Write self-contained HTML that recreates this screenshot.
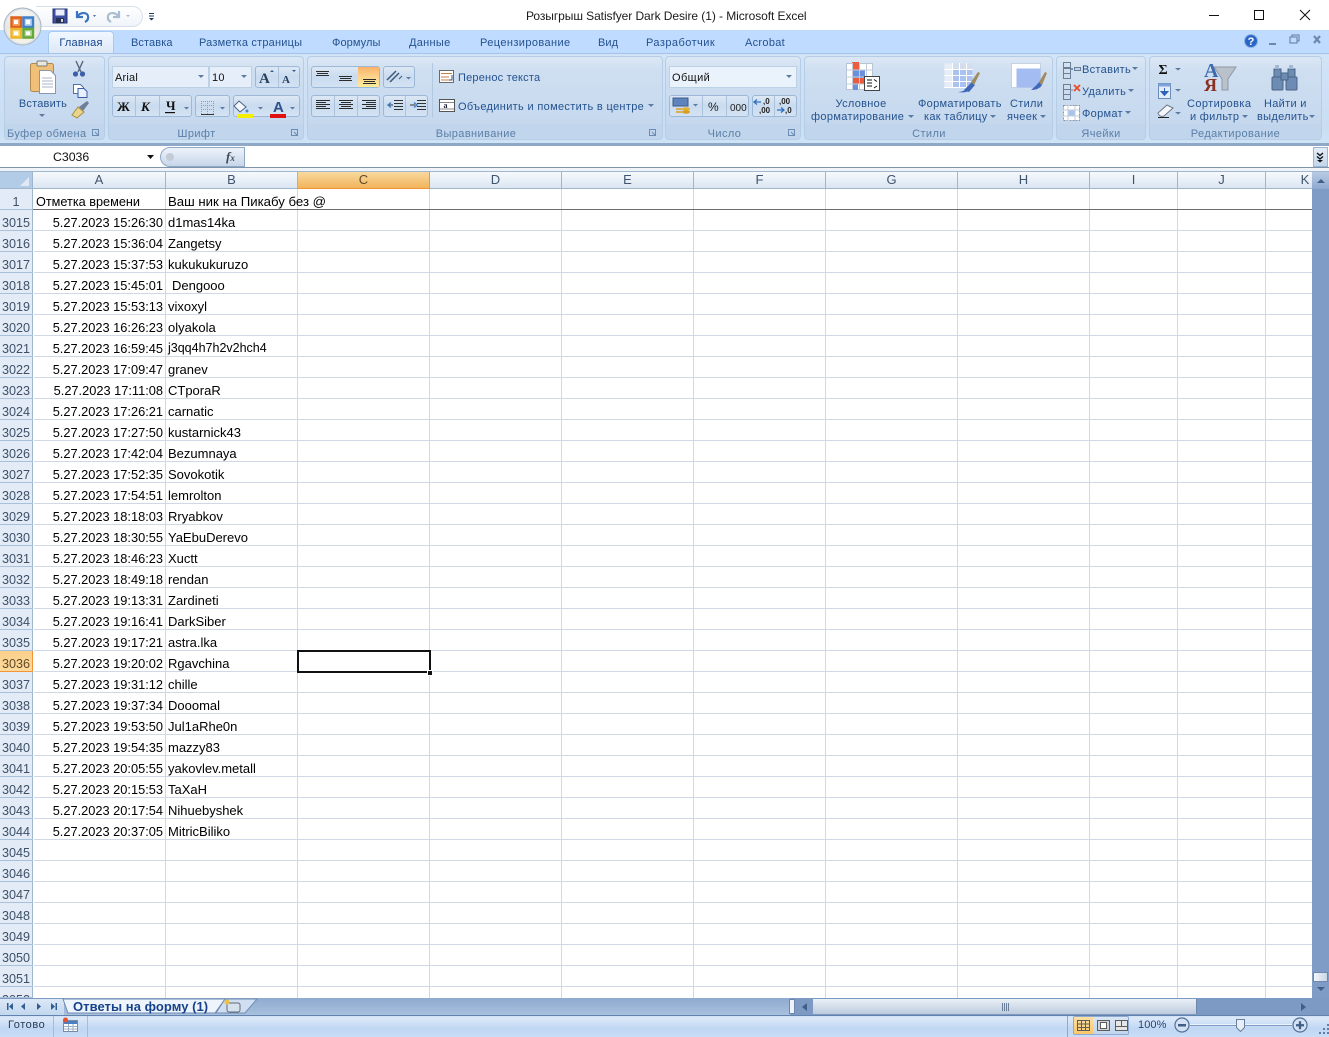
<!DOCTYPE html>
<html lang="ru"><head><meta charset="utf-8"><title>Excel</title>
<style>
html,body{margin:0;padding:0;background:#fff}
body{width:1329px;height:1037px;overflow:hidden;position:relative;font-family:"Liberation Sans",sans-serif}
div,svg{position:absolute}
.t{font-size:11px;letter-spacing:.3px;color:#24528f;white-space:nowrap;line-height:13px}
.c{text-align:center}
.lab{font-size:11px;letter-spacing:.4px;color:#5a7ea8;white-space:nowrap;line-height:13px;text-align:center;top:127px}
.grp{top:56px;height:84px;border:1px solid #b6cde6;border-radius:4px;box-sizing:border-box;background:linear-gradient(#dbe7f5 0,#cfdff1 14px,#c5d8ee 68px);overflow:hidden}
.grp:after{content:"";position:absolute;left:0;right:0;bottom:0;height:15px;background:#c1d6ec}
.btn{border:1px solid #9db8d6;border-radius:3px;box-sizing:border-box;background:linear-gradient(#dde8f5,#c9dbef 50%,#d4e3f3)}
.fld{background:#e6eff9;border:1px solid #bcd0e6;box-sizing:border-box}
.ch{top:172px;height:17px;box-sizing:border-box;background:linear-gradient(#f6f9fc,#dbe6f2);border-right:1px solid #9eb6ce;border-bottom:1px solid #9eb6ce;text-align:center;font-size:13px;line-height:16px;color:#40546e}
.rh{left:0;width:33px;height:21px;box-sizing:border-box;background:#e2ebf6;border-bottom:1px solid #a9c0da;border-right:1px solid #9eb6ce;text-align:center;font-size:12.6px;line-height:26px;color:#3e5068}
.a{left:34px;width:129px;text-align:right;font-size:12.8px;line-height:23px;color:#000;white-space:nowrap}
.b{left:168px;font-size:13px;line-height:23px;color:#000;white-space:nowrap}
.vl{top:189px;height:809px;width:1px;background:#d0d7e5}
.hl{left:34px;width:1278px;height:1px;background:#d0d7e5}
.ar{width:0;height:0;border-left:3px solid transparent;border-right:3px solid transparent;border-top:3px solid #5b7ba3}
</style></head><body>

<!-- title bar -->
<div style="left:0;top:0;width:1329px;height:30px;background:#fff"></div>
<div style="left:36px;top:6px;width:107px;height:21px;border:1px solid #d5dfeb;border-left:none;border-radius:0 11px 11px 0;background:linear-gradient(#fff,#f0f4f9);box-sizing:border-box"></div>
<div class="t" style="left:526px;top:9px;font-size:12px;letter-spacing:-.07px;color:#1a1a1a;line-height:14px">Розыгрыш Satisfyer Dark Desire (1)  -  Microsoft Excel</div>
<svg style="left:1200px;top:5px" width="129" height="22" viewBox="0 0 129 22" fill="none" stroke="#111"><path d="M9 10.500h10"/><rect x="54.500" y="5.500" width="9" height="9"/><path d="M100 5l10 10M110 5l-10 10"/></svg>

<!-- quick access -->
<svg style="left:52px;top:8px" width="108" height="17" viewBox="0 0 108 17">
<rect x="1" y="1" width="14" height="14" fill="#3d4f9e" stroke="#27357a"/><rect x="3.500" y="1.500" width="9" height="6" fill="#e8eefc"/><rect x="4" y="10" width="8" height="5" fill="#28304f"/><rect x="9" y="11" width="2" height="3" fill="#cdd"/>
<path d="M25 3v6h6M25.500 8.500C28 4 35 4 36 8c.7 3-1 5-3 6" fill="none" stroke="#3a73c0" stroke-width="2.200"/>
<path d="M41 7l3 0-1.500 2z" fill="#506d94"/>
<path d="M66 3v6h-6M65.500 8.500C63 4 56 4 55 8c-.7 3 1 5 3 6" fill="none" stroke="#a8bcd2" stroke-width="2.200" transform="translate(1 0)"/>
<path d="M74 7l4 0-2 2z" fill="#a8b6c6"/>
<path d="M97 5.500h5M97 8h5" stroke="#1c3a63" fill="none"/><path d="M97 10h5l-2.500 2.500z" fill="#1c3a63"/>
</svg>

<!-- tab strip -->
<div style="left:0;top:30px;width:1329px;height:24px;background:#bfdbff"></div>
<div style="left:48px;top:31px;width:66px;height:23px;box-sizing:border-box;border:1px solid #a9c9ee;border-bottom:none;border-radius:4px 4px 0 0;background:linear-gradient(#f0f7ff,#dde9f7)"></div>
<div class="t c" style="left:48px;top:37px;width:66px;color:#15428b;letter-spacing:.2px">Главная</div>
<div class="t" style="left:131px;top:37px;letter-spacing:.1px">Вставка</div>
<div class="t" style="left:199px;top:37px;letter-spacing:.2px">Разметка страницы</div>
<div class="t" style="left:332px;top:37px;letter-spacing:.1px">Формулы</div>
<div class="t" style="left:409px;top:37px;letter-spacing:.3px">Данные</div>
<div class="t" style="left:480px;top:37px;letter-spacing:.4px">Рецензирование</div>
<div class="t" style="left:598px;top:37px;letter-spacing:.1px">Вид</div>
<div class="t" style="left:646px;top:37px;letter-spacing:.45px">Разработчик</div>
<div class="t" style="left:745px;top:37px;letter-spacing:.3px">Acrobat</div>
<svg style="left:1240px;top:32px" width="89" height="20" viewBox="0 0 89 20">
<circle cx="11" cy="9" r="6.500" fill="#2a66c8" stroke="#8fb2e0"/><text x="11" y="13" text-anchor="middle" font-size="11" font-weight="bold" fill="#fff" font-family="Liberation Sans">?</text>
<rect x="29" y="11" width="7" height="2" fill="#6d88a8"/>
<rect x="52" y="3" width="7" height="6" fill="none" stroke="#6d88a8" stroke-width="1.200"/><rect x="50" y="5" width="7" height="6" fill="#bfdbff" stroke="#6d88a8" stroke-width="1.200"/>
<path d="M74 4l6 7M80 4l-6 7" stroke="#6d88a8" stroke-width="2.200"/>
</svg>

<!-- ribbon -->
<div style="left:0;top:53px;width:1329px;height:92px;background:linear-gradient(#d3e4f8,#c9ddf3 80%,#cfe4f6);border-top:1px solid #a4c3e6;box-sizing:border-box"></div>
<div style="left:0;top:143px;width:1329px;height:3px;background:#8ea8c6"></div>

<div class="grp" style="left:4px;width:101px"></div>
<div class="grp" style="left:108px;width:196px"></div>
<div class="grp" style="left:307px;width:356px"></div>
<div class="grp" style="left:665px;width:136px"></div>
<div class="grp" style="left:804px;width:249px"></div>
<div class="grp" style="left:1056px;width:90px"></div>
<div class="grp" style="left:1149px;width:173px"></div>

<div class="lab" style="left:7px;top:128px">Буфер обмена</div>
<div class="lab" style="left:108px;width:177px;top:128px">Шрифт</div>
<div class="lab" style="left:307px;width:338px;top:128px">Выравнивание</div>
<div class="lab" style="left:665px;width:119px;top:128px">Число</div>
<div class="lab" style="left:804px;width:250px;top:128px">Стили</div>
<div class="lab" style="left:1056px;width:90px;top:128px">Ячейки</div>
<div class="lab" style="left:1149px;width:173px;top:128px">Редактирование</div>

<svg style="left:0;top:125px" width="810" height="15" viewBox="0 0 810 15" fill="none" stroke="#6b8cb2">
<path d="M92.500 4.500h6v6h-6zM95 7l3 3"/><path d="M291.500 4.500h6v6h-6zM294 7l3 3"/><path d="M649.500 4.500h6v6h-6zM652 7l3 3"/><path d="M788.500 4.500h6v6h-6zM791 7l3 3"/>
</svg>

<!-- clipboard -->
<svg style="left:26px;top:58px" width="70" height="66" viewBox="0 0 70 66">
<rect x="4.500" y="5.500" width="23" height="28" rx="2" fill="#f0c078" stroke="#b08a4e"/>
<rect x="11" y="3" width="10" height="5" rx="1" fill="#e8e8e0" stroke="#7d7d70"/>
<path d="M13.500 12.500h11l5 5v18h-16z" fill="#fff" stroke="#8a98ad"/><path d="M16 20h10M16 23h11M16 26h11M16 29h11" stroke="#a8b3c4"/>
<path d="M50 3l5 11M57 3l-5 11" stroke="#56647c" stroke-width="1.400" fill="none"/><circle cx="49.500" cy="16" r="2.600" fill="#3a5fa8"/><circle cx="56.500" cy="16" r="2.600" fill="#3a5fa8"/>
<path d="M47.500 26.500h7l3 3v6h-10z" fill="#fff" stroke="#5570a0"/><path d="M52 30.500h6l3 3v6h-9z" fill="#e8f0ff" stroke="#3a5fa8"/>
<path d="M46 57l6-8 6 5-7 6z" fill="#e8d48a" stroke="#a89040"/><path d="M53 49l8-6 2 2-6 8z" fill="#6f7f9a"/>
</svg>
<div class="t c" style="left:4px;top:98px;width:78px;letter-spacing:.2px">Вставить</div>
<div class="ar" style="left:39px;top:114px"></div>

<!-- font -->
<div class="fld" style="left:112px;top:66px;width:97px;height:22px"></div>
<div class="fld" style="left:209px;top:66px;width:43px;height:22px"></div>
<div class="t" style="left:115px;top:72px;color:#111;letter-spacing:.2px">Arial</div>
<div class="t" style="left:212px;top:72px;color:#111;letter-spacing:.2px">10</div>
<div class="ar" style="left:198px;top:75px"></div><div class="ar" style="left:241px;top:75px"></div>
<div class="btn" style="left:255px;top:66px;width:45px;height:22px"></div>
<div style="left:278px;top:67px;width:1px;height:20px;background:#adc3dc"></div>
<div class="btn" style="left:112px;top:95px;width:80px;height:22px"></div>
<div class="btn" style="left:195px;top:95px;width:35px;height:22px"></div>
<div class="btn" style="left:233px;top:95px;width:67px;height:22px"></div>
<div style="left:135px;top:96px;width:1px;height:20px;background:#adc3dc"></div>
<div style="left:159px;top:96px;width:1px;height:20px;background:#adc3dc"></div>
<svg style="left:112px;top:64px" width="192" height="56" viewBox="0 0 192 56" font-family="Liberation Serif" font-weight="bold">
<text x="147" y="19" font-size="15" fill="#25405f">A</text><text x="170" y="19" font-size="11" fill="#25405f">A</text>
<path d="M158 8l2-2 2 2zM180 6h4l-2 2z" fill="#2e5c9a"/>
<text x="5" y="47" font-size="13" fill="#111">Ж</text><text x="29" y="47" font-size="13" font-style="italic" fill="#111">К</text><text x="54" y="46" font-size="13" fill="#111">Ч</text><rect x="53" y="48" width="10" height="1.200" fill="#111"/>
<path d="M72 43h5l-2.500 2.500zM108 43h5l-2.500 2.500zM146 43h5l-2.500 2.500zM178 43h5l-2.500 2.500z" fill="#5b7ba3"/>
<path d="M89 37.500h13M89 41.500h13M89 45.500h13M89.500 37v13M95.500 37v13M101.500 37v13" stroke="#8a9cb3" stroke-dasharray="1 1" fill="none"/><path d="M89 50.500h13" stroke="#333"/>
<path d="M127 37l7 6-6 5-6-6z" fill="#f4f7fb" stroke="#4a6485"/><circle cx="135" cy="47" r="1.500" fill="#4a8acb"/><rect x="125" y="50" width="16" height="4" fill="#f5ee00"/>
<text x="161" y="48" font-size="15" fill="#2f4f8a" font-family="Liberation Sans">A</text><rect x="158" y="50" width="16" height="4" fill="#e01010"/>
</svg>

<!-- alignment -->
<div class="btn" style="left:311px;top:66px;width:69px;height:22px"></div>
<div style="left:358px;top:67px;width:21px;height:20px;background:linear-gradient(#fbb069,#fdcf87 40%,#fdeb9c)"></div>
<div class="btn" style="left:383px;top:66px;width:32px;height:22px"></div>
<div class="btn" style="left:311px;top:95px;width:69px;height:22px"></div>
<div class="btn" style="left:383px;top:95px;width:45px;height:22px"></div>
<div style="left:334px;top:96px;width:1px;height:20px;background:#adc3dc"></div>
<div style="left:357px;top:96px;width:1px;height:20px;background:#adc3dc"></div>
<div style="left:405px;top:96px;width:1px;height:20px;background:#adc3dc"></div>
<svg style="left:311px;top:64px" width="125" height="56" viewBox="0 0 125 56" fill="none" stroke="#2b2b2b">
<path d="M5 7.500h13M6 9.500h11M5 11.500h13"/><path d="M28 12.500h13M29 14.500h11M28 16.500h13"/><path d="M52 15.500h13M53 17.500h11M52 19.500h13"/>
<path d="M76 16l9-9M79 18l9-9" stroke="#3d5878" stroke-width="1.500"/><path d="M88 15l3-3" stroke="#3d5878"/><path d="M95 13h5l-2.500 2.500z" fill="#5b7ba3" stroke="none"/>
<path d="M5 36.500h14M5 38.500h10M5 40.500h14M5 42.500h10M5 44.500h14"/>
<path d="M28 36.500h14M30 38.500h10M28 40.500h14M30 42.500h10M28 44.500h14"/>
<path d="M51 36.500h14M55 38.500h10M51 40.500h14M55 42.500h10M51 44.500h14"/>
<path d="M83 36.500h9M83 39.500h9M83 42.500h9M83 45.500h9M78 41h4M106 36.500h9M106 39.500h9M106 42.500h9M106 45.500h9M99 41h5" stroke="#333"/><path d="M80 38.500l-3 2.500 3 2.500M103 38.500l3 2.500-3 2.500" stroke="#3f7fca" stroke-width="1.400"/>
</svg>
<div style="left:432px;top:63px;width:1px;height:55px;background:#b2c9e2"></div>
<svg style="left:439px;top:69px" width="17" height="45" viewBox="0 0 17 45" fill="none">
<rect x=".5" y="1.500" width="14" height="12" fill="#fff" stroke="#6a6a6a"/><path d="M2 4.500h11M2 8h8M2 11h8" stroke="#c08040"/><path d="M13 6v5h-3" stroke="#2c4f8a"/>
<rect x=".5" y="30.500" width="15" height="12" fill="#fff" stroke="#555"/><path d="M1 33.500h14M1 40h14" stroke="#888"/><text x="4.500" y="39" font-size="8" font-weight="bold" fill="#223" font-family="Liberation Serif">a</text>
</svg>
<div class="t" style="left:458px;top:72px;letter-spacing:.2px">Перенос текста</div>
<div class="t" style="left:458px;top:101px;letter-spacing:.33px">Объединить и поместить в центре</div>
<div class="ar" style="left:648px;top:104px"></div>

<!-- number -->
<div class="fld" style="left:669px;top:66px;width:128px;height:22px;background:#eaf2fb"></div>
<div class="t" style="left:672px;top:72px;color:#111;letter-spacing:.4px">Общий</div>
<div class="ar" style="left:786px;top:75px"></div>
<div class="btn" style="left:669px;top:95px;width:80px;height:22px"></div>
<div class="btn" style="left:752px;top:95px;width:45px;height:22px"></div>
<div style="left:702px;top:96px;width:1px;height:20px;background:#adc3dc"></div>
<div style="left:726px;top:96px;width:1px;height:20px;background:#adc3dc"></div>
<div style="left:774px;top:96px;width:1px;height:20px;background:#adc3dc"></div>
<svg style="left:669px;top:95px" width="128" height="22" viewBox="0 0 128 22">
<rect x="4" y="3" width="15" height="8" fill="#5f84bd" stroke="#3c5a8c"/><ellipse cx="17" cy="14" rx="4" ry="1.700" fill="#e8b030"/><ellipse cx="17" cy="17" rx="4" ry="1.700" fill="#d9a020"/><path d="M7 14h6M7 17h6" stroke="#d9a020" stroke-width="1.400"/>
<path d="M24 9h5l-2.500 2.500z" fill="#5b7ba3"/>
<text x="39" y="16" font-size="12" fill="#222" font-family="Liberation Sans">%</text>
<text x="61" y="16" font-size="10" fill="#222" font-family="Liberation Sans">000</text>
<text x="94" y="9" font-size="8" font-weight="bold" fill="#222" font-family="Liberation Sans">,0</text><text x="90" y="18" font-size="8" font-weight="bold" fill="#222" font-family="Liberation Sans">,00</text><path d="M85 7h7M88 4.500l-3 2.500 3 2.500" stroke="#2f6fc0" fill="none" stroke-width="1.300"/>
<text x="110" y="9" font-size="8" font-weight="bold" fill="#222" font-family="Liberation Sans">,00</text><text x="116" y="18" font-size="8" font-weight="bold" fill="#222" font-family="Liberation Sans">,0</text><path d="M108 15h7M112 12.500l3 2.500-3 2.500" stroke="#2f6fc0" fill="none" stroke-width="1.300"/>
</svg>

<!-- styles -->
<svg style="left:845px;top:60px" width="215" height="36" viewBox="0 0 215 36">
<g><rect x="1.500" y="3.500" width="26" height="26" fill="#fff" stroke="#b8c4d4"/><rect x="7" y="2" width="7" height="8" fill="#ee5a3d"/><rect x="7" y="10" width="13" height="8" fill="#6a90dd"/><rect x="7" y="18" width="12" height="6" fill="#ee5a3d"/><rect x="7" y="24" width="6" height="6" fill="#6a90dd"/><path d="M1 10h27M1 17h27M1 24h27M7.500 3v27M14.500 3v27M21.500 3v27" stroke="#c3cddb" fill="none"/>
<rect x="19.500" y="16.500" width="15" height="14" fill="#fff" stroke="#444"/><path d="M22 20h5M29 19.500l3 2M22 23h5M22 26h5M29 28l3-2" stroke="#111" fill="none"/></g>
<g transform="translate(99 3)"><rect x=".5" y=".5" width="28" height="24" fill="#a9c2ef"/><rect x=".5" y=".5" width="28" height="6" fill="#d3dded"/><rect x=".5" y=".5" width="8" height="24" fill="#e8eef8"/><path d="M0 6.500h29M0 12.500h29M0 18.500h29M0 24.500h29M8.500 0v25M15.500 0v25M22.500 0v25" stroke="#fff" fill="none"/>
<path d="M20 27l8-8 3 3-6 7z" fill="#3f68b8"/><path d="M13 29c5 0 8-1 11-6l3 3c-2 3-6 4-14 3z" fill="#3f68b8"/><path d="M27 19l7-10 2 1-6 12z" fill="#a08a60"/></g>
<g transform="translate(166 3)"><rect x=".5" y=".5" width="29" height="24" fill="#fff" stroke="#c7d0dd"/><rect x="5.500" y="5.500" width="24" height="19" fill="#a3bdf2"/><path d="M20 27c2-2 6-5 8-8l3 3c-2 3-5 5-11 5z" fill="#3f68b8"/><path d="M28 19l6-10 2 1-5 12z" fill="#a08a60"/></g>
</svg>
<div class="t c" style="left:811px;top:98px;width:100px">Условное</div>
<div class="t" style="left:811px;top:111px;letter-spacing:.35px">форматирование</div>
<div class="ar" style="left:908px;top:115px"></div>
<div class="t" style="left:918px;top:98px">Форматировать</div>
<div class="t" style="left:924px;top:111px">как таблицу</div>
<div class="ar" style="left:990px;top:115px"></div>
<div class="t" style="left:1010px;top:98px">Стили</div>
<div class="t" style="left:1007px;top:111px">ячеек</div>
<div class="ar" style="left:1040px;top:115px"></div>

<!-- cells -->
<svg style="left:1062px;top:60px" width="20" height="62" viewBox="0 0 20 62" fill="none" stroke="#6d7f95">
<path d="M1.500 2.500h7v5h-7zM1.500 8.500h7v5h-7zM1.500 13.500h7v5h-7z"/><path d="M9 9h2" stroke="#1b3d75"/><rect x="12.500" y="7.500" width="6" height="3" fill="#b9d3f2"/>
<path d="M1.500 24.500h7v5h-7zM1.500 29.500h7v5h-7zM1.500 34.500h7v5h-7z"/><path d="M8 30h3" stroke="#789"/><path d="M12 25l6 6M18 25l-6 6" stroke="#e84a2a" stroke-width="1.800"/>
<rect x="1.500" y="45.500" width="16" height="15" fill="#fff" stroke="#8a98a8" stroke-dasharray="2 1"/><rect x="6" y="50" width="7" height="6" fill="#a9c2ef"/><path d="M1 50h17M1 56h17M6 45v16M13 45v16" stroke="#c3cddb"/>
</svg>
<div class="t" style="left:1082px;top:64px">Вставить</div>
<div class="ar" style="left:1132px;top:67px"></div>
<div class="t" style="left:1082px;top:86px">Удалить</div>
<div class="ar" style="left:1128px;top:89px"></div>
<div class="t" style="left:1082px;top:108px">Формат</div>
<div class="ar" style="left:1125px;top:111px"></div>

<!-- editing -->
<svg style="left:1155px;top:60px" width="166" height="62" viewBox="0 0 166 62">
<text x="3.500" y="14" font-size="14" font-weight="bold" fill="#111" font-family="Liberation Serif">Σ</text>
<path d="M20 8h6l-3 2.500zM20 29h6l-3 2.500zM20 52h6l-3 2.500z" fill="#5b7ba3"/>
<rect x="3.500" y="23.500" width="12" height="15" fill="#e4eefb" stroke="#6a8cb8"/><rect x="3.500" y="23.500" width="12" height="3" fill="#7ea3d8"/><path d="M9.500 28v6M6 31.500l3.500 4 3.500-4z" fill="#2e63b8" stroke="#2e63b8"/>
<path d="M3 53l9-8 6 3-9 8c-3 1-5 0-6-3z" fill="#f4f6fa" stroke="#707a88"/><path d="M3 57.500h11" stroke="#222"/>
<text x="49" y="17" font-size="20" font-weight="bold" fill="#3d6aad" font-family="Liberation Serif">А</text><text x="49" y="31" font-size="18" font-weight="bold" fill="#8c3022" font-family="Liberation Serif">Я</text>
<path d="M59 7h22l-8 12v11h-6V19z" fill="#b9c1cb" stroke="#8e98a4"/>
<g fill="#6d8cb4" stroke="#4a6485"><rect x="117" y="17" width="11" height="13" rx="1"/><rect x="131" y="17" width="11" height="13" rx="1"/><rect x="119" y="9" width="7" height="8"/><rect x="133" y="9" width="7" height="8"/><rect x="126" y="13" width="7" height="7"/></g><path d="M120 5h4v4h-4zM134 5h4v4h-4z" fill="#a3b8d3"/>
</svg>
<div class="t" style="left:1187px;top:98px;letter-spacing:.4px">Сортировка</div>
<div class="t" style="left:1190px;top:111px">и фильтр</div>
<div class="ar" style="left:1242px;top:115px"></div>
<div class="t" style="left:1264px;top:98px">Найти и</div>
<div class="t" style="left:1257px;top:111px">выделить</div>
<div class="ar" style="left:1309px;top:115px"></div>

<!-- office button -->
<svg style="left:3px;top:6px" width="40" height="42" viewBox="0 0 40 42">
<defs><linearGradient id="og" x1="0" y1="0" x2="0" y2="1"><stop offset="0" stop-color="#f6f6f4"/><stop offset=".5" stop-color="#e9e7df"/><stop offset="1" stop-color="#f6f3e6"/></linearGradient></defs>
<circle cx="19.500" cy="20.500" r="18.500" fill="#dfe6ee" stroke="#a8b3c0"/><circle cx="19.500" cy="20.500" r="16.500" fill="url(#og)"/>
<path d="M8.500 11.500h9.500v9.500H8.500z" fill="#f2a35f" stroke="#df5f1e" stroke-width="2.400"/><rect x="11" y="14" width="4" height="4" fill="#fff"/>
<path d="M20.500 11.500h9.500v9.500h-9.500z" fill="#b8d3ef" stroke="#3f7fc8" stroke-width="2.400"/><rect x="23" y="14" width="4" height="4" fill="#fff"/>
<path d="M8.500 23h9.500v8.500H8.500z" fill="#f6dd8c" stroke="#edb52a" stroke-width="2.400"/><rect x="11" y="25.500" width="4" height="3.500" fill="#fff"/>
<path d="M20.500 23h9.500v8.500h-9.500z" fill="#b8d89a" stroke="#62a83a" stroke-width="2.400"/><rect x="23" y="25.500" width="4" height="3.500" fill="#fff"/>
</svg>

<!-- formula bar -->
<div style="left:0;top:146px;width:1329px;height:21px;background:#fff;border-bottom:1px solid #7d94ae;box-sizing:content-box"></div>
<div style="left:0;top:168px;width:1329px;height:3px;background:#f0f4f9;border-bottom:1px solid #9eb6ce"></div>
<div style="left:53px;top:150px;font-size:12.300px;line-height:14px;color:#111">C3036</div>
<svg style="left:146px;top:154px" width="10" height="6"><path d="M1 1h7L4.500 5z" fill="#111"/></svg>
<div style="left:160px;top:147px;width:85px;height:20px;box-sizing:border-box;border:1px solid #8fa8c4;border-radius:10px 0 0 10px;background:linear-gradient(#eef3fa,#c6d6ea)"></div>
<div style="left:166px;top:153px;width:8px;height:8px;border-radius:50%;background:#c3ccd6"></div>
<div style="left:226px;top:149px;font:italic bold 13px 'Liberation Serif',serif;color:#3c4a5c;line-height:16px">f<span style="font-size:9px">x</span></div>
<div style="left:1313px;top:147px;width:15px;height:20px;box-sizing:border-box;border:1px solid #9eb6ce;background:linear-gradient(#e4edf8,#c3d6ec)"></div>
<svg style="left:1315px;top:152px" width="11" height="11" fill="none" stroke="#111" stroke-width="1.400"><path d="M2 1l3 2.500L8 1M2 4.500L5 7l3-2.500"/><path d="M2 8h6l-3 2.500z" fill="#111" stroke="none"/></svg>

<!-- column headers -->
<div style="left:0;top:172px;width:33px;height:17px;background:#b2cbe7;border-right:1px solid #9eb6ce;border-bottom:1px solid #9eb6ce;box-sizing:border-box"></div>
<svg style="left:19px;top:176px" width="12" height="11"><path d="M10 1v9H1z" fill="#dfe8f3"/></svg>
<div class="ch" style="left:33px;width:133px">A</div>
<div class="ch" style="left:166px;width:132px">B</div>
<div class="ch" style="left:298px;width:132px;background:linear-gradient(#f9d99f,#f1b45c);border-right:1px solid #f29536;border-bottom:1px solid #f29536;color:#5e4a28">C</div>
<div class="ch" style="left:430px;width:132px">D</div>
<div class="ch" style="left:562px;width:132px">E</div>
<div class="ch" style="left:694px;width:132px">F</div>
<div class="ch" style="left:826px;width:132px">G</div>
<div class="ch" style="left:958px;width:132px">H</div>
<div class="ch" style="left:1090px;width:88px">I</div>
<div class="ch" style="left:1178px;width:88px">J</div>
<div class="ch" style="left:1266px;width:46px;padding-left:32px;border-right:none">K</div>

<!-- grid lines -->
<div class="vl" style="left:165px"></div><div class="vl" style="left:297px"></div><div class="vl" style="left:429px"></div><div class="vl" style="left:561px"></div><div class="vl" style="left:693px"></div><div class="vl" style="left:825px"></div><div class="vl" style="left:957px"></div><div class="vl" style="left:1089px"></div><div class="vl" style="left:1177px"></div><div class="vl" style="left:1265px"></div>
<div class="hl" style="top:230px"></div><div class="hl" style="top:251px"></div><div class="hl" style="top:272px"></div><div class="hl" style="top:293px"></div><div class="hl" style="top:314px"></div><div class="hl" style="top:335px"></div><div class="hl" style="top:356px"></div><div class="hl" style="top:377px"></div><div class="hl" style="top:398px"></div><div class="hl" style="top:419px"></div><div class="hl" style="top:440px"></div><div class="hl" style="top:461px"></div><div class="hl" style="top:482px"></div><div class="hl" style="top:503px"></div><div class="hl" style="top:524px"></div><div class="hl" style="top:545px"></div><div class="hl" style="top:566px"></div><div class="hl" style="top:587px"></div><div class="hl" style="top:608px"></div><div class="hl" style="top:629px"></div><div class="hl" style="top:650px"></div><div class="hl" style="top:671px"></div><div class="hl" style="top:692px"></div><div class="hl" style="top:713px"></div><div class="hl" style="top:734px"></div><div class="hl" style="top:755px"></div><div class="hl" style="top:776px"></div><div class="hl" style="top:797px"></div><div class="hl" style="top:818px"></div><div class="hl" style="top:839px"></div><div class="hl" style="top:860px"></div><div class="hl" style="top:881px"></div><div class="hl" style="top:902px"></div><div class="hl" style="top:923px"></div><div class="hl" style="top:944px"></div><div class="hl" style="top:965px"></div><div class="hl" style="top:986px"></div>
<div style="left:0;top:209px;width:1312px;height:1px;background:#6d6d6d"></div>

<!-- row 1 -->
<div class="rh" style="top:189px;height:21px">1</div>
<div class="b" style="left:36px;top:191px;font-size:12.700px">Отметка времени</div>
<div class="b" style="top:190px;font-size:13.200px">Ваш ник на Пикабу без @</div>

<!-- rows -->
<div class="rh" style="top:210px">3015</div><div class="a" style="top:211px">5.27.2023 15:26:30</div><div class="b" style="top:211px">d1mas14ka</div>
<div class="rh" style="top:231px">3016</div><div class="a" style="top:232px">5.27.2023 15:36:04</div><div class="b" style="top:232px">Zangetsy</div>
<div class="rh" style="top:252px">3017</div><div class="a" style="top:253px">5.27.2023 15:37:53</div><div class="b" style="top:253px">kukukukuruzo</div>
<div class="rh" style="top:273px">3018</div><div class="a" style="top:274px">5.27.2023 15:45:01</div><div class="b" style="top:274px;left:172px">Dengooo</div>
<div class="rh" style="top:294px">3019</div><div class="a" style="top:295px">5.27.2023 15:53:13</div><div class="b" style="top:295px">vixoxyl</div>
<div class="rh" style="top:315px">3020</div><div class="a" style="top:316px">5.27.2023 16:26:23</div><div class="b" style="top:316px">olyakola</div>
<div class="rh" style="top:336px">3021</div><div class="a" style="top:337px">5.27.2023 16:59:45</div><div class="b" style="top:337px;font-size:12.500px">j3qq4h7h2v2hch4</div>
<div class="rh" style="top:357px">3022</div><div class="a" style="top:358px">5.27.2023 17:09:47</div><div class="b" style="top:358px">granev</div>
<div class="rh" style="top:378px">3023</div><div class="a" style="top:379px">5.27.2023 17:11:08</div><div class="b" style="top:379px">CTporaR</div>
<div class="rh" style="top:399px">3024</div><div class="a" style="top:400px">5.27.2023 17:26:21</div><div class="b" style="top:400px">carnatic</div>
<div class="rh" style="top:420px">3025</div><div class="a" style="top:421px">5.27.2023 17:27:50</div><div class="b" style="top:421px">kustarnick43</div>
<div class="rh" style="top:441px">3026</div><div class="a" style="top:442px">5.27.2023 17:42:04</div><div class="b" style="top:442px">Bezumnaya</div>
<div class="rh" style="top:462px">3027</div><div class="a" style="top:463px">5.27.2023 17:52:35</div><div class="b" style="top:463px">Sovokotik</div>
<div class="rh" style="top:483px">3028</div><div class="a" style="top:484px">5.27.2023 17:54:51</div><div class="b" style="top:484px">lemrolton</div>
<div class="rh" style="top:504px">3029</div><div class="a" style="top:505px">5.27.2023 18:18:03</div><div class="b" style="top:505px">Rryabkov</div>
<div class="rh" style="top:525px">3030</div><div class="a" style="top:526px">5.27.2023 18:30:55</div><div class="b" style="top:526px">YaEbuDerevo</div>
<div class="rh" style="top:546px">3031</div><div class="a" style="top:547px">5.27.2023 18:46:23</div><div class="b" style="top:547px">Xuctt</div>
<div class="rh" style="top:567px">3032</div><div class="a" style="top:568px">5.27.2023 18:49:18</div><div class="b" style="top:568px">rendan</div>
<div class="rh" style="top:588px">3033</div><div class="a" style="top:589px">5.27.2023 19:13:31</div><div class="b" style="top:589px">Zardineti</div>
<div class="rh" style="top:609px">3034</div><div class="a" style="top:610px">5.27.2023 19:16:41</div><div class="b" style="top:610px">DarkSiber</div>
<div class="rh" style="top:630px">3035</div><div class="a" style="top:631px">5.27.2023 19:17:21</div><div class="b" style="top:631px">astra.lka</div>
<div class="rh" style="top:651px;background:linear-gradient(#fbd08c,#fdd99c);border-right:1px solid #f29536;border-bottom:1px solid #f29536;color:#5e4a28">3036</div><div class="a" style="top:652px">5.27.2023 19:20:02</div><div class="b" style="top:652px">Rgavchina</div>
<div class="rh" style="top:672px">3037</div><div class="a" style="top:673px">5.27.2023 19:31:12</div><div class="b" style="top:673px">chille</div>
<div class="rh" style="top:693px">3038</div><div class="a" style="top:694px">5.27.2023 19:37:34</div><div class="b" style="top:694px">Dooomal</div>
<div class="rh" style="top:714px">3039</div><div class="a" style="top:715px">5.27.2023 19:53:50</div><div class="b" style="top:715px">Jul1aRhe0n</div>
<div class="rh" style="top:735px">3040</div><div class="a" style="top:736px">5.27.2023 19:54:35</div><div class="b" style="top:736px">mazzy83</div>
<div class="rh" style="top:756px">3041</div><div class="a" style="top:757px">5.27.2023 20:05:55</div><div class="b" style="top:757px">yakovlev.metall</div>
<div class="rh" style="top:777px">3042</div><div class="a" style="top:778px">5.27.2023 20:15:53</div><div class="b" style="top:778px">TaXaH</div>
<div class="rh" style="top:798px">3043</div><div class="a" style="top:799px">5.27.2023 20:17:54</div><div class="b" style="top:799px">Nihuebyshek</div>
<div class="rh" style="top:819px">3044</div><div class="a" style="top:820px">5.27.2023 20:37:05</div><div class="b" style="top:820px">MitricBiliko</div>
<div class="rh" style="top:840px">3045</div>
<div class="rh" style="top:861px">3046</div>
<div class="rh" style="top:882px">3047</div>
<div class="rh" style="top:903px">3048</div>
<div class="rh" style="top:924px">3049</div>
<div class="rh" style="top:945px">3050</div>
<div class="rh" style="top:966px">3051</div>
<div class="rh" style="top:987px;height:11px;overflow:hidden">3052</div>

<!-- selection -->
<div style="left:297px;top:650px;width:134px;height:23px;box-sizing:border-box;border:2px solid #111"></div>
<div style="left:427px;top:670px;width:4px;height:4px;background:#111;border:1px solid #fff"></div>

<!-- vertical scrollbar -->
<div style="left:1312px;top:172px;width:17px;height:843px;background:#7f9cc6"></div>
<div style="left:1312px;top:172px;width:17px;height:17px;background:linear-gradient(#b8cbe4,#8ea8cf)"></div>
<svg style="left:1312px;top:172px" width="17" height="17"><path d="M5 11h8L9 7z" fill="#3f5f88"/></svg>
<div style="left:1313px;top:972px;width:15px;height:10px;background:linear-gradient(90deg,#f2f6fb,#c9d6e6);border:1px solid #6d88ac;box-sizing:border-box"></div>
<svg style="left:1312px;top:982px" width="17" height="17"><path d="M5 5h8l-4 4z" fill="#3f5f88"/></svg>

<!-- sheet tabs -->
<div style="left:0;top:998px;width:1329px;height:17px;background:#7c9ac4"></div>
<div style="left:0;top:998px;width:790px;height:17px;background:linear-gradient(#8faacf,#a9c0de)"></div>
<div style="left:0;top:998px;width:64px;height:17px;background:linear-gradient(#dce8f6,#c2d7ee);border-top:1px solid #7d9ac0;box-sizing:border-box"></div>
<svg style="left:0;top:998px" width="66" height="17" fill="#2f5d94"><path d="M7 5v7h1.500V5zM13 5l-4 3.500L13 12zM25 5l-4 3.500 4 3.500zM37 5l4 3.500L37 12zM51 5l4 3.500L51 12zM55.500 5v7H57V5z"/></svg>
<svg style="left:62px;top:998px" width="200" height="17"><path d="M1 1L6 15H153L163 1z" fill="#eef4fb" stroke="#6f8db3"/><path d="M154 15l9-14h32l-12 14z" fill="#cfdff1" stroke="#6f8db3"/><rect x="165" y="5" width="13" height="9" rx="2" fill="#d6e1ee" stroke="#667"/><circle cx="165" cy="4" r="2.500" fill="#f0c040"/></svg>
<div style="left:73px;top:999px;font-size:13px;font-weight:bold;letter-spacing:.05px;line-height:15px;color:#15428b;white-space:nowrap">Ответы на форму (1)</div>

<!-- horizontal scrollbar -->
<div style="left:789px;top:999px;width:6px;height:15px;background:#eef3fa;border:1px solid #6d88ac;box-sizing:border-box"></div>
<div style="left:796px;top:999px;width:516px;height:16px;background:#7c9ac4"></div>
<svg style="left:796px;top:999px" width="516" height="16"><path d="M11 4v8L6 8zM505 4v8l5-4z" fill="#3f5f88"/></svg>
<div style="left:813px;top:999px;width:384px;height:15px;background:linear-gradient(#eaf0f7,#bccbdd);border-right:1px solid #6d88ac;box-sizing:border-box"></div>
<svg style="left:1002px;top:1003px" width="8" height="8" stroke="#6a7f99"><path d="M.5 0v8M2.500 0v8M4.500 0v8M6.500 0v8"/></svg>

<!-- status bar -->
<div style="left:0;top:1015px;width:1329px;height:22px;background:linear-gradient(#cfe0f6,#dce9f9 10%,#c0d7f3 60%,#c9ddf6);border-top:1px solid #6283ad;box-sizing:border-box"></div>
<div class="t" style="left:8px;top:1019px;letter-spacing:.55px;color:#2a3a55">Готово</div>
<div style="left:53px;top:1016px;width:1px;height:21px;background:#a3bedd"></div>
<div style="left:87px;top:1016px;width:1px;height:21px;background:#a3bedd"></div>
<svg style="left:62px;top:1017px" width="18" height="16"><rect x="1.500" y="3.500" width="14" height="11" fill="#fff" stroke="#7a8ca4"/><rect x="2" y="4" width="13" height="3" fill="#4c7fc2"/><path d="M2 9.500h13M2 12h13M6.500 7v7M11 7v7" stroke="#9caec4"/><circle cx="3.500" cy="3" r="2.500" fill="#e4512e"/></svg>
<div style="left:1067px;top:1016px;width:1px;height:21px;background:#8eaad0"></div>
<div style="left:1073px;top:1016px;width:56px;height:19px;border:1px solid #8eaad0;border-radius:2px;box-sizing:border-box;background:linear-gradient(#dbe7f6,#c0d5ee)"></div>
<div style="left:1074px;top:1017px;width:19px;height:17px;background:linear-gradient(#fbe0a5,#fcc668)"></div>
<svg style="left:1074px;top:1017px" width="55" height="17" fill="none" stroke="#5c5c5c"><path d="M3.500 3.500h12v10h-12zM3.500 7h12M3.500 10.500h12M7.500 3.500v10M11.500 3.500v10"/><rect x="23.500" y="3.500" width="12" height="10" fill="#d0d4d8"/><rect x="26.500" y="5.500" width="6" height="6" fill="#fff"/><rect x="41.500" y="3.500" width="12" height="10" fill="#e4e6e8"/><path d="M47.500 3.500v6M41.500 9.500h12" /></svg>
<div class="t" style="left:1138px;top:1019px;letter-spacing:.1px;color:#24447a">100%</div>
<div style="left:1190px;top:1024px;width:102px;height:1px;background:#eef4fc;border-bottom:1px solid #7f9cc4"></div>
<svg style="left:1172px;top:1016px" width="157" height="20">
<circle cx="10" cy="9" r="7" fill="#d3e1f2" stroke="#50709a" stroke-width="1.200"/><rect x="6" y="8" width="8" height="2.500" fill="#3f5f88"/>
<circle cx="128" cy="9" r="7" fill="#d3e1f2" stroke="#50709a" stroke-width="1.200"/><path d="M124 9.250h8M128 5.250v8" stroke="#3f5f88" stroke-width="2.300"/>
<path d="M64.500 3.500h8v8l-4 4-4-4z" fill="#e8eef6" stroke="#6a7f99"/>
<path d="M155 8h2v2h-2zM151 12h2v2h-2zM155 12h2v2h-2zM147 16h2v2h-2zM151 16h2v2h-2zM155 16h2v2h-2z" fill="#5e7fa8"/>
</svg>
</body></html>
